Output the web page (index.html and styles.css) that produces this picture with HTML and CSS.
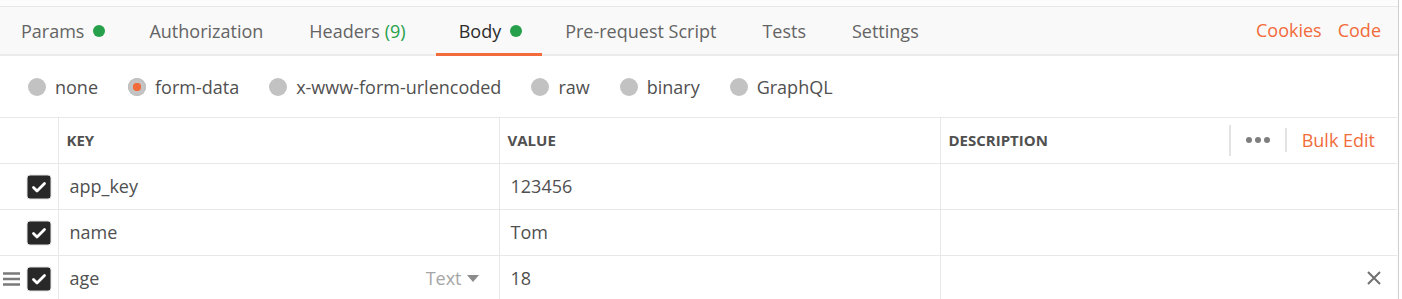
FILE: index.html
```html
<!DOCTYPE html>
<html lang="en">
<head>
    <meta charset="UTF-8">
    <title>Request - Body</title>
    <link rel="stylesheet" href="styles.css">
</head>
<body>
    <div class="panel">
        <div class="tabs">
            <div class="tab-list">
                <a class="tab">Params <span class="dot"></span></a>
                <a class="tab">Authorization</a>
                <a class="tab">Headers <span class="count">(9)</span></a>
                <a class="tab active">Body <span class="dot"></span></a>
                <a class="tab">Pre-request Script</a>
                <a class="tab">Tests</a>
                <a class="tab">Settings</a>
            </div>
            <div class="tab-actions">
                <a>Cookies</a>
                <a>Code</a>
            </div>
        </div>

        <div class="body-types">
            <label class="radio"><span class="circle"></span>none</label>
            <label class="radio checked"><span class="circle"></span>form-data</label>
            <label class="radio"><span class="circle"></span>x-www-form-urlencoded</label>
            <label class="radio"><span class="circle"></span>raw</label>
            <label class="radio"><span class="circle"></span>binary</label>
            <label class="radio"><span class="circle"></span>GraphQL</label>
        </div>

        <table class="kv">
            <colgroup>
                <col class="col-check">
                <col class="col-key">
                <col class="col-value">
                <col>
            </colgroup>
            <thead>
                <tr>
                    <th></th>
                    <th>Key</th>
                    <th>Value</th>
                    <th>
                        <div class="desc-head">
                            <span>Description</span>
                            <div class="head-tools">
                                <span class="sep"></span>
                                <span class="more"><i></i><i></i><i></i></span>
                                <span class="sep short"></span>
                                <a class="bulk">Bulk Edit</a>
                            </div>
                        </div>
                    </th>
                </tr>
            </thead>
            <tbody>
                <tr>
                    <td class="check">
                        <svg class="cb" width="26" height="26" viewBox="0 0 26 26"><rect x="1" y="1" width="24" height="24" rx="3" fill="#282828" stroke="#e2e2e2"/><path d="M7.5 13.5l3.5 3.5 7.5-7.5" fill="none" stroke="#fff" stroke-width="2.8" stroke-linecap="round" stroke-linejoin="round"/></svg>
                    </td>
                    <td>app_key</td>
                    <td>123456</td>
                    <td></td>
                </tr>
                <tr>
                    <td class="check">
                        <svg class="cb" width="26" height="26" viewBox="0 0 26 26"><rect x="1" y="1" width="24" height="24" rx="3" fill="#282828" stroke="#e2e2e2"/><path d="M7.5 13.5l3.5 3.5 7.5-7.5" fill="none" stroke="#fff" stroke-width="2.8" stroke-linecap="round" stroke-linejoin="round"/></svg>
                    </td>
                    <td>name</td>
                    <td>Tom</td>
                    <td></td>
                </tr>
                <tr>
                    <td class="check">
                        <div class="check-wrap">
                            <svg class="drag" width="18" height="14" viewBox="0 0 18 14"><path d="M0 1.5h17M0 7h17M0 12.5h17" stroke="#7a7a7a" stroke-width="2.4"/></svg>
                            <svg class="cb" width="26" height="26" viewBox="0 0 26 26"><rect x="1" y="1" width="24" height="24" rx="3" fill="#282828" stroke="#e2e2e2"/><path d="M7.5 13.5l3.5 3.5 7.5-7.5" fill="none" stroke="#fff" stroke-width="2.8" stroke-linecap="round" stroke-linejoin="round"/></svg>
                        </div>
                    </td>
                    <td>
                        <div class="key-cell">
                            <span>age</span>
                            <span class="type">Text <svg width="12" height="7" viewBox="0 0 12 7"><path d="M0 0h12L6 7z" fill="#8c8c8c"/></svg></span>
                        </div>
                    </td>
                    <td>18</td>
                    <td>
                        <div class="row-end">
                            <svg width="14" height="14" viewBox="0 0 14 14"><path d="M1 1l12 12M13 1L1 13" stroke="#707070" stroke-width="2"/></svg>
                        </div>
                    </td>
                </tr>
            </tbody>
        </table>
    </div>
</body>
</html>
```

FILE: styles.css
```css
:root {
    --orange: #f26b3a;
    --green: #26a04a;
    --text-color: #505050;
    --line: #e8e8e8;
}

* {
    margin: 0;
    padding: 0;
    box-sizing: border-box;
}

body {
    font-family: 'Open Sans', sans-serif;
    font-size: 18px;
    color: var(--text-color);
    background: #fff;
    overflow: hidden;
}

.panel {
    width: 1399px;
    height: 299px;
    border-right: 1px solid #cfcfcf;
    padding-top: 6px;
    background: #fcfcfc;
}

/* tab bar */
.tabs {
    display: flex;
    justify-content: space-between;
    align-items: stretch;
    height: 50px;
    background: #f9f9f9;
    border-top: 1px solid var(--line);
    border-bottom: 2px solid #ebebeb;
}

.tab-list {
    display: flex;
    margin-left: -2px;
}

.tab {
    display: flex;
    align-items: center;
    gap: 9px;
    padding: 1px 23px 0;
    color: #646464;
    line-height: 1;
    border-bottom: 3px solid transparent;
    margin-bottom: -2px;
}

.tab:first-child {
    padding-right: 21px;
}

.tab.active {
    color: #2c2c2c;
    border-bottom-color: var(--orange);
    margin-left: 7px;
    padding-right: 20px;
}

.dot {
    width: 12px;
    height: 12px;
    border-radius: 50%;
    background: var(--green);
}

.count {
    color: var(--green);
    margin-left: -4px;
}

.tab-actions {
    display: flex;
    align-items: center;
    gap: 16px;
    padding-right: 17px;
    padding-bottom: 2px;
}

.tab-actions a {
    color: var(--orange);
}

/* body type radios */
.body-types {
    display: flex;
    align-items: center;
    gap: 30px;
    height: 61px;
    padding-left: 28px;
    background: #fff;
}

.radio {
    display: flex;
    align-items: center;
    gap: 9px;
    color: var(--text-color);
}

.circle {
    width: 18px;
    height: 18px;
    border-radius: 50%;
    background: #c2c2c2;
}

.radio.checked .circle {
    background: radial-gradient(circle, var(--orange) 0 4px, #c4c4c4 4.5px);
    box-shadow: inset 0 0 0 1px #bdbdbd;
}

/* key / value table */
.kv {
    width: 1397px;
    table-layout: fixed;
    border-collapse: collapse;
    background: #fff;
}

.col-check { width: 58px; }
.col-key { width: 441px; }
.col-value { width: 441px; }

.kv th,
.kv td {
    height: 46px;
    border: 1px solid var(--line);
    text-align: left;
    vertical-align: middle;
    padding: 0 10px;
}

.kv tr > :first-child {
    border-left: none;
}

.kv tr > :last-child {
    border-right: none;
}

.kv th {
    font-size: 15px;
    font-weight: 700;
    text-transform: uppercase;
    color: #505050;
    padding: 0 8px 1px;
}

.kv td {
    color: #505050;
    padding: 0 10px 1px 11px;
}

.kv td.check {
    padding: 0 6px 0 0;
}

.check-wrap {
    display: flex;
    align-items: center;
    justify-content: space-between;
    padding-left: 3px;
}

.cb {
    display: block;
    margin-left: auto;
}

.drag {
    display: block;
}

.desc-head {
    display: flex;
    align-items: center;
    justify-content: space-between;
}

.head-tools {
    display: flex;
    align-items: center;
    gap: 15px;
    text-transform: none;
    padding-right: 14px;
}

.sep {
    width: 2px;
    height: 31px;
    background: #e4e4e4;
}

.sep.short {
    height: 24px;
}

.more {
    display: flex;
    gap: 3px;
}

.more i {
    width: 6px;
    height: 6px;
    border-radius: 50%;
    background: #7e7e7e;
}

.bulk {
    font-size: 18px;
    font-weight: 400;
    color: var(--orange);
}

.key-cell {
    display: flex;
    justify-content: space-between;
    align-items: center;
}

.type {
    display: flex;
    align-items: center;
    gap: 5px;
    color: #a6a6a6;
    padding-right: 10px;
}

.row-end {
    display: flex;
    justify-content: flex-end;
    padding-right: 6px;
}

.row-end svg {
    display: block;
}
```
